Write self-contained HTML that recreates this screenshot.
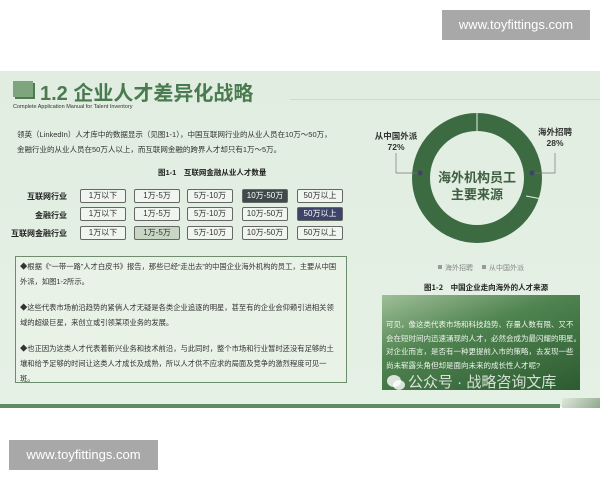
<!DOCTYPE html>
<html><head><meta charset="utf-8"><style>
*{margin:0;padding:0;box-sizing:border-box}
body{width:600px;height:480px;background:#fff;position:relative;overflow:hidden;font-family:"Liberation Sans","Noto Sans CJK SC",sans-serif}
.a{position:absolute}
.slide{left:0;top:71px;width:600px;height:336px;background:linear-gradient(180deg,#e0ede0,#e6f1e6)}
.wm{background:#a8a8a8;color:#fff;font-size:13px;text-align:center;line-height:30px}
.cell{position:absolute;width:46px;height:14px;border:1px solid #666;border-radius:2px;font-size:8px;line-height:12px;text-align:center;color:#333;background:#f1f5f0}
.lab{position:absolute;font-size:8px;font-weight:bold;color:#222;text-align:right;width:62px}
.p{font-size:7.5px;color:#333;line-height:15px}
</style></head><body>
<div class="a slide"></div>
<div class="a" style="left:0;top:404px;width:560px;height:4px;background:#5f8a62"></div>
<div class="a" style="left:562px;top:398px;width:38px;height:10px;background:linear-gradient(135deg,#dfe9dc,#8fa88c)"></div>
<div class="a wm" style="left:442px;top:10px;width:148px">www.toyfittings.com</div>
<div class="a wm" style="left:9px;top:440px;width:149px">www.toyfittings.com</div>

<div class="a" style="left:13px;top:81px;width:20px;height:16px;background:#7fa57e;box-shadow:2px 2px 0 #4d7a50"></div>
<div class="a" style="left:40px;top:77px;font-size:20px;font-weight:bold;color:#4a7a50">1.2 企业人才差异化战略</div>
<div class="a" style="left:13px;top:104px;font-size:5.5px;color:#333">Complete Application Manual for Talent Inventory</div>
<div class="a" style="left:290px;top:99px;width:310px;height:1px;background:#cfdccd"></div>

<div class="a p" style="left:17px;top:127px">领英（LinkedIn）人才库中的数据显示（见图1-1），中国互联网行业的从业人员在10万～50万，<br>金融行业的从业人员在50万人以上，而互联网金融的跨界人才却只有1万～5万。</div>
<div class="a" style="left:158px;top:167px;font-size:7.5px;font-weight:bold;color:#222">图1-1　互联网金融从业人才数量</div>

<div class="lab" style="left:5px;top:191px">互联网行业</div>
<div class="lab" style="left:5px;top:210px">金融行业</div>
<div class="lab" style="left:5px;top:228px">互联网金融行业</div>

<div class="cell" style="left:80px;top:189px">1万以下</div>
<div class="cell" style="left:134px;top:189px">1万-5万</div>
<div class="cell" style="left:187px;top:189px">5万-10万</div>
<div class="cell" style="left:242px;top:189px;background:#3f4a4a;color:#fff">10万-50万</div>
<div class="cell" style="left:297px;top:189px">50万以上</div>
<div class="cell" style="left:80px;top:207px">1万以下</div>
<div class="cell" style="left:134px;top:207px">1万-5万</div>
<div class="cell" style="left:187px;top:207px">5万-10万</div>
<div class="cell" style="left:242px;top:207px">10万-50万</div>
<div class="cell" style="left:297px;top:207px;background:#3e4468;color:#fff">50万以上</div>
<div class="cell" style="left:80px;top:226px">1万以下</div>
<div class="cell" style="left:134px;top:226px;background:#c9d6c4">1万-5万</div>
<div class="cell" style="left:187px;top:226px">5万-10万</div>
<div class="cell" style="left:242px;top:226px">10万-50万</div>
<div class="cell" style="left:297px;top:226px">50万以上</div>

<div class="a" style="left:15px;top:256px;width:332px;height:127px;border:1px solid #6e8d6c;background:#e8f2e7"></div>
<div class="a p" style="left:20px;top:259px;width:320px;font-size:7.3px">◆根据《“一带一路”人才白皮书》报告，那些已经“走出去”的中国企业海外机构的员工，主要从中国外派，如图1-2所示。</div>
<div class="a p" style="left:20px;top:300px;width:320px;font-size:7.3px">◆这些代表市场前沿趋势的紧俏人才无疑是各类企业追逐的明星，甚至有的企业会仰赖引进相关领域的超级巨星，来创立或引领某项业务的发展。</div>
<div class="a p" style="left:20px;top:341px;width:320px;font-size:7.3px">◆也正因为这类人才代表着新兴业务和技术前沿，与此同时，整个市场和行业暂时还没有足够的土壤和给予足够的时间让这类人才成长及成熟，所以人才供不应求的局面及竞争的激烈程度可见一斑。</div>

<svg class="a" style="left:360px;top:100px" width="240" height="200">
<circle cx="117" cy="78" r="56" fill="none" stroke="#3c6b42" stroke-width="18"/>
<path d="M117 13 L117 31" stroke="#e4eee2" stroke-width="1"/>
<path d="M166 96 L182 99" stroke="#e4eee2" stroke-width="1"/>
<polyline points="36,53 36,73 60,73" fill="none" stroke="#777" stroke-width="0.7"/>
<polyline points="195,53 195,73 172,73" fill="none" stroke="#777" stroke-width="0.7"/>
<circle cx="60" cy="73" r="2.5" fill="#3e4468"/><circle cx="172" cy="73" r="2.5" fill="#3e4468"/>
<text x="117" y="82" font-size="13" font-weight="bold" fill="#3f5f42" text-anchor="middle" font-family="Noto Sans CJK SC">海外机构员工</text>
<text x="117" y="99" font-size="13" font-weight="bold" fill="#3f5f42" text-anchor="middle" font-family="Noto Sans CJK SC">主要来源</text>
<text x="36" y="39" font-size="8.5" font-weight="bold" fill="#333" text-anchor="middle" font-family="Noto Sans CJK SC">从中国外派</text>
<text x="36" y="50" font-size="8.5" font-weight="bold" fill="#333" text-anchor="middle">72%</text>
<text x="195" y="35" font-size="8.5" font-weight="bold" fill="#333" text-anchor="middle" font-family="Noto Sans CJK SC">海外招聘</text>
<text x="195" y="46" font-size="8.5" font-weight="bold" fill="#333" text-anchor="middle">28%</text>
<rect x="78" y="165" width="4" height="4" fill="#999"/><text x="85" y="170" font-size="7" fill="#888" font-family="Noto Sans CJK SC">海外招聘</text>
<rect x="122" y="165" width="4" height="4" fill="#999"/><text x="129" y="170" font-size="7" fill="#888" font-family="Noto Sans CJK SC">从中国外派</text>
<text x="64" y="190" font-size="7.5" font-weight="bold" fill="#222" font-family="Noto Sans CJK SC">图1-2　中国企业走向海外的人才来源</text>
</svg>

<div class="a" style="left:382px;top:295px;width:198px;height:95px;background:linear-gradient(160deg,#9fbf98 0%,#4f8350 40%,#2d5b31 100%)"></div>
<div class="a" style="left:386px;top:318px;font-size:7.5px;line-height:13.5px;color:#eef5ec;white-space:nowrap">可见，像这类代表市场和科技趋势、存量人数有限、又不<br>会在短时间内迅速涌现的人才，必然会成为最闪耀的明星。<br>对企业而言，是否有一种更提前入市的策略，去发现一些<br>尚未崭露头角但却是面向未来的成长性人才呢?</div>
<svg class="a" style="left:386px;top:373px" width="20" height="18"><ellipse cx="8" cy="8" rx="7" ry="6" fill="rgba(255,255,255,0.8)"/><ellipse cx="13" cy="12" rx="6" ry="5" fill="rgba(255,255,255,0.8)"/></svg>
<div class="a" style="left:408px;top:371px;font-size:15px;color:rgba(255,255,255,0.8);white-space:nowrap">公众号 · 战略咨询文库</div>
</body></html>
